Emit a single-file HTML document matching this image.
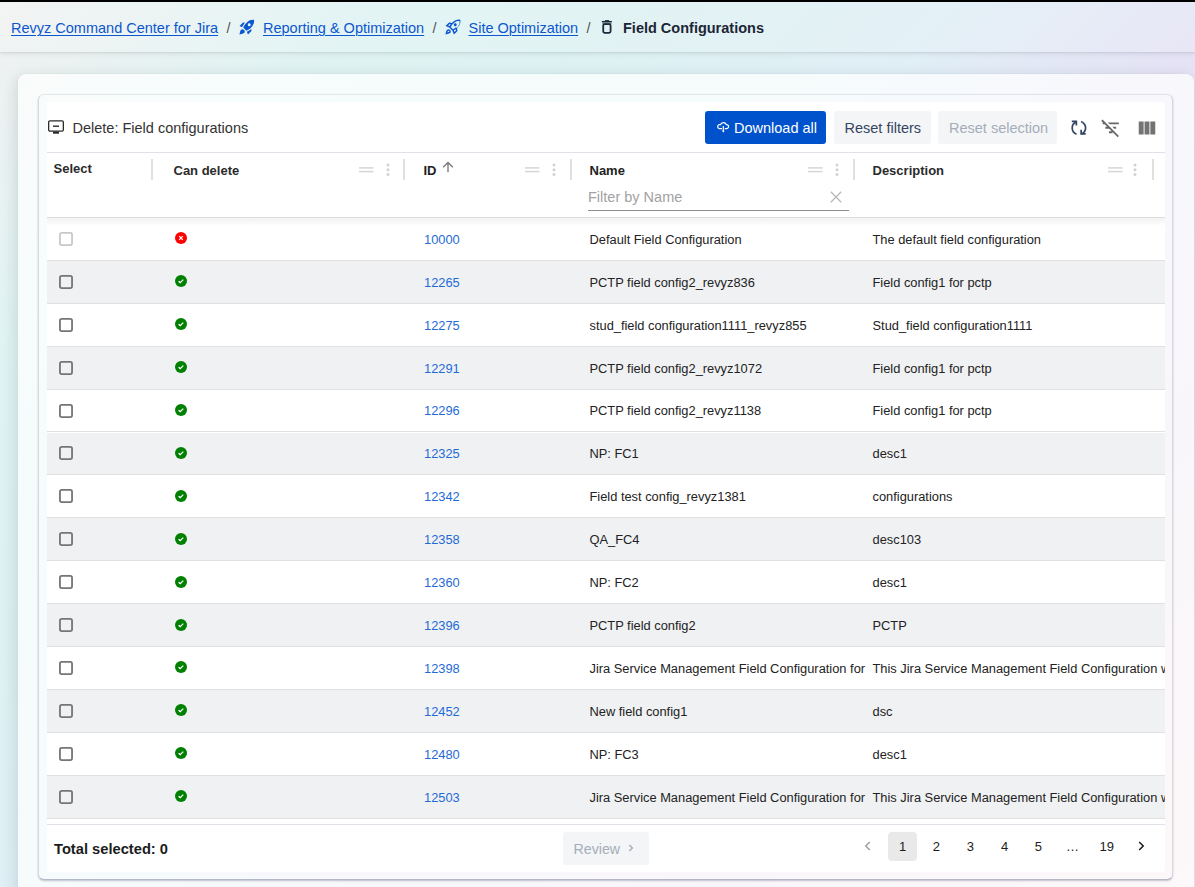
<!DOCTYPE html>
<html><head><meta charset="utf-8">
<style>
*{box-sizing:border-box}
html,body{margin:0;padding:0}
body{width:1195px;height:887px;overflow:hidden;position:relative;font-family:"Liberation Sans",sans-serif;
 background:linear-gradient(135deg,#f1f1f1 0%,#e0f3f2 17%,#ddf1f2 30%,#e0eff6 46%,#e5e2f5 60%,#eadff0 78%,#f6e6ec 100%);}
.t{position:absolute;line-height:1;white-space:pre}
.abs{position:absolute}
a{color:inherit}
.topbar{position:absolute;left:0;top:0;width:1195px;height:2px;background:#000}
.header{position:absolute;left:0;top:2px;width:1195px;height:50px;background:rgba(255,255,255,0.15);box-shadow:0 1px 2px rgba(0,0,0,0.09),0 2px 7px rgba(0,0,0,0.06)}
.panel{position:absolute;left:18px;top:74px;width:1176px;height:830px;border-radius:8px;background:rgba(255,255,255,0.72);box-shadow:0 0 2px rgba(0,40,50,0.05),0 6px 16px rgba(10,40,60,0.08),-5px 0 14px rgba(0,50,50,0.05)}
.card{position:absolute;left:38px;top:94px;width:1135px;height:786px;border-radius:6px;border:1px solid rgba(0,40,60,0.15);border-top-color:rgba(0,40,60,0.09);border-bottom-color:rgba(20,35,80,0.30);box-shadow:0 1px 1.5px rgba(20,30,70,0.18),0 1px 3px rgba(20,30,60,0.08)}
.inner{position:absolute;left:47px;top:102px;width:1118px;height:770px;border-radius:3px;background:#fff;overflow:hidden}
.lnk{text-decoration:underline;text-underline-offset:2px;text-decoration-thickness:1px}
.btn{position:absolute;border-radius:3px}
.row{position:absolute;left:47px;width:1118px;border-bottom:1px solid #dcdcdc}
.grey{background:#f0f1f3}
</style></head><body>
<div class="topbar"></div>
<div class="header"></div>
<div class="t" style="left:11.00px;top:21.13px;font-size:14.5px;font-weight:400;color:#0b57d0;"><span class="lnk">Revyz Command Center for Jira</span></div>
<div class="t" style="left:226.50px;top:21.13px;font-size:14.5px;font-weight:400;color:#555;">/</div>
<svg class="abs" style="left:237.5px;top:17.5px" width="18" height="18" viewBox="0 0 24 24"><path fill="#0b57d0" d="M9.19 6.35c-2.04 2.29-3.44 5.58-3.57 5.89L2 10.69l4.05-4.05c.47-.47 1.15-.68 1.81-.55l1.33.26zM11.17 17s3.74-1.55 5.89-3.7c5.4-5.4 4.5-9.62 4.21-10.57-.95-.3-5.17-1.19-10.57 4.21C8.55 9.09 7 12.83 7 12.83L11.17 17zm6.48-2.19c-2.29 2.04-5.58 3.44-5.89 3.57L13.31 22l4.05-4.05c.47-.47.68-1.15.55-1.81l-.26-1.33zM9 18c0 .83-.34 1.58-.88 2.12C6.94 21.3 2 22 2 22s.7-4.94 1.88-6.12C4.42 15.34 5.17 15 6 15c1.66 0 3 1.34 3 3zm4-9c0-1.1.9-2 2-2s2 .9 2 2-.9 2-2 2-2-.9-2-2z"/></svg>
<div class="t" style="left:263.00px;top:21.13px;font-size:14.5px;font-weight:400;color:#0b57d0;"><span class="lnk">Reporting &amp; Optimization</span></div>
<div class="t" style="left:432.50px;top:21.13px;font-size:14.5px;font-weight:400;color:#555;">/</div>
<svg class="abs" style="left:443.5px;top:17.5px" width="18" height="18" viewBox="0 0 24 24"><path fill="#0b57d0" d="M6 15c-.83 0-1.58.34-2.12.88C2.7 17.06 2 22 2 22s4.94-.7 6.12-1.88c.54-.54.88-1.29.88-2.12 0-1.66-1.34-3-3-3zm.71 3.71c-.28.28-2.17.76-2.17.76s.47-1.88.76-2.17c.17-.19.42-.3.7-.3.55 0 1 .45 1 1 0 .28-.11.53-.29.71zm10.71-5.06c6.36-6.36 4.24-11.31 4.24-11.31S16.71.22 10.35 6.58l-2.49-.5c-.65-.13-1.33.08-1.81.55L2 10.69l5 2.14L11.17 17l2.14 5 4.05-4.05c.47-.47.68-1.15.55-1.81l-.51-2.49zM7.41 10.83l-1.91-.82 1.97-1.97 1.44.29c-.57.83-1.08 1.7-1.5 2.5zm6.58 7.67l-.82-1.91c.8-.42 1.67-.93 2.49-1.5l.29 1.44-1.96 1.97zM16 12.24c-1.32 1.32-3.38 2.4-4.04 2.73l-2.93-2.93c.32-.65 1.4-2.71 2.73-4.04 4.68-4.68 8.23-3.99 8.99-3.74.24.77.93 4.32-3.75 9zM15 11c1.1 0 2-.9 2-2s-.9-2-2-2-2 .9-2 2 .9 2 2 2z"/></svg>
<div class="t" style="left:468.50px;top:21.13px;font-size:14.5px;font-weight:400;color:#0b57d0;"><span class="lnk">Site Optimization</span></div>
<div class="t" style="left:586.50px;top:21.13px;font-size:14.5px;font-weight:400;color:#555;">/</div>
<svg class="abs" style="left:600px;top:18px" width="14" height="18" viewBox="0 0 14 18"><path d="M1.83 3.58H11.88" stroke="#1e293b" stroke-width="1.3"/><path d="M5.06 2.55H9.03" stroke="#1e293b" stroke-width="0.95"/><rect x="3.23" y="6.1" width="7.37" height="8.74" rx="1.5" fill="none" stroke="#1e293b" stroke-width="1.8"/><rect x="2.33" y="4.2" width="9.17" height="2" fill="#1e293b" opacity="0.55"/></svg>
<div class="t" style="left:623.00px;top:21.13px;font-size:14.5px;font-weight:700;color:#1c2636;">Field Configurations</div>
<div class="panel"></div>
<div class="card"></div>
<div class="inner"></div>
<svg class="abs" style="left:47px;top:119px" width="18" height="16" viewBox="0 0 18 16"><rect x="1.65" y="1.85" width="14.7" height="10.3" rx="1.3" fill="none" stroke="#2b2b2b" stroke-width="1.3"/><path d="M6 7.2H12" stroke="#2b2b2b" stroke-width="1.4"/><rect x="6" y="12.5" width="6" height="2.2" fill="#2b2b2b"/></svg>
<div class="t" style="left:72.50px;top:120.73px;font-size:14.5px;font-weight:400;color:#333;">Delete: Field configurations</div>
<div class="btn" style="left:705px;top:111px;width:121px;height:33px;background:#0052cc"></div>
<svg class="abs" style="left:716px;top:120px" width="14" height="14" viewBox="0 0 14 14"><path d="M6.0 8.6H3.7A2 2 0 1 1 4.52 4.77A3 3 0 0 1 10.24 4.63A2 2 0 1 1 10.6 8.6H8.7" fill="none" stroke="#fff" stroke-width="1.2" stroke-linejoin="round"/><path d="M7.3 5.9V11.2" stroke="#fff" stroke-width="1.2"/><path d="M5.9 10.7L7.3 12.6 8.7 10.7Z" fill="#fff"/></svg>
<div class="t" style="left:734.00px;top:120.73px;font-size:14.5px;font-weight:400;color:#fff;">Download all</div>
<div class="btn" style="left:834px;top:111px;width:97px;height:33px;background:#f4f5f7"></div>
<div class="t" style="left:844.50px;top:120.73px;font-size:14.5px;font-weight:400;color:#344563;">Reset filters</div>
<div class="btn" style="left:938px;top:111px;width:119px;height:33px;background:#f4f5f7"></div>
<div class="t" style="left:949.00px;top:120.73px;font-size:14.5px;font-weight:400;color:#a5adba;">Reset selection</div>
<svg class="abs" style="left:1068px;top:118px" width="20" height="20" viewBox="0 0 20 20"><g fill="none" stroke="#344563" stroke-width="1.7"><path d="M8.2 3.9C5.6 5.0 4.2 7.3 4.2 9.9C4.2 12.6 5.8 15.0 8.5 16.3"/><path d="M3.8 3.3H8.35V7.4"/><path d="M13.1 3.4C15.9 4.8 17.6 7.0 17.6 9.8C17.6 12.4 16.1 14.8 13.5 16.0"/><path d="M13.15 11.8V15.85H17.7"/></g></svg>
<svg class="abs" style="left:1099.7px;top:116.9px" width="21.5" height="21.5" viewBox="0 0 24 24"><path fill="#666" d="M10.83 8H21V6H8.83l2 2zm5 5H18v-2h-4.17l2 2zM14 16.83V18h-4v-2h3.17l-3-3H6v-2h2.17l-3-3H3V6h.17L1.39 4.22 2.8 2.81l18.38 18.38-1.41 1.41L14 16.83z"/></svg>
<svg class="abs" style="left:1135.5px;top:116.9px" width="22" height="22" viewBox="0 0 24 24"><path fill="#737373" d="M14.67 5v14H9.33V5h5.34zm1 14H21V5h-5.33v14zm-7.34 0V5H3v14h5.33z"/></svg>
<div class="abs" style="left:47px;top:152px;width:1118px;height:1px;background:#dfe1e8"></div>
<div class="abs" style="left:47px;top:217px;width:1118px;height:1px;background:#dddddd"></div>
<div class="abs" style="left:47px;top:218px;width:1118px;height:8px;background:linear-gradient(rgba(0,0,0,0.05),rgba(0,0,0,0))"></div>
<div class="t" style="left:53.50px;top:161.60px;font-size:13px;font-weight:700;color:#2b2b2b;">Select</div>
<div class="abs" style="left:150.5px;top:159px;width:2px;height:20.5px;background:#e0e0e0"></div>
<div class="t" style="left:173.50px;top:163.80px;font-size:13px;font-weight:700;color:#2b2b2b;">Can delete</div>
<svg class="abs" style="left:358.5px;top:165px" width="15" height="9" viewBox="0 0 15 9"><rect x="0" y="2.15" width="14.5" height="1.5" fill="#d6d6d6"/><rect x="0" y="5.85" width="14.5" height="1.5" fill="#d6d6d6"/></svg>
<svg class="abs" style="left:384.7px;top:161px" width="6" height="17" viewBox="0 0 6 17"><circle cx="3" cy="4" r="1.5" fill="#d2d2d2"/><circle cx="3" cy="8.8" r="1.5" fill="#d2d2d2"/><circle cx="3" cy="13.6" r="1.5" fill="#d2d2d2"/></svg>
<div class="abs" style="left:403.2px;top:159px;width:2px;height:20.5px;background:#e0e0e0"></div>
<div class="t" style="left:423.50px;top:164.00px;font-size:13px;font-weight:700;color:#1e1e1e;">ID</div>
<svg class="abs" style="left:442px;top:161px" width="12" height="12" viewBox="0 0 12 12"><path d="M6 11.3V1.6M1.2 6.2L6 1.4 10.8 6.2" fill="none" stroke="#7a7a7a" stroke-width="1.35"/></svg>
<svg class="abs" style="left:524.5px;top:165px" width="15" height="9" viewBox="0 0 15 9"><rect x="0" y="2.15" width="14.5" height="1.5" fill="#d6d6d6"/><rect x="0" y="5.85" width="14.5" height="1.5" fill="#d6d6d6"/></svg>
<svg class="abs" style="left:550.7px;top:161px" width="6" height="17" viewBox="0 0 6 17"><circle cx="3" cy="4" r="1.5" fill="#d2d2d2"/><circle cx="3" cy="8.8" r="1.5" fill="#d2d2d2"/><circle cx="3" cy="13.6" r="1.5" fill="#d2d2d2"/></svg>
<div class="abs" style="left:570px;top:159px;width:2px;height:20.5px;background:#e0e0e0"></div>
<div class="t" style="left:589.50px;top:164.00px;font-size:13px;font-weight:700;color:#1e1e1e;">Name</div>
<svg class="abs" style="left:807.5px;top:165px" width="15" height="9" viewBox="0 0 15 9"><rect x="0" y="2.15" width="14.5" height="1.5" fill="#d6d6d6"/><rect x="0" y="5.85" width="14.5" height="1.5" fill="#d6d6d6"/></svg>
<svg class="abs" style="left:833.7px;top:161px" width="6" height="17" viewBox="0 0 6 17"><circle cx="3" cy="4" r="1.5" fill="#d2d2d2"/><circle cx="3" cy="8.8" r="1.5" fill="#d2d2d2"/><circle cx="3" cy="13.6" r="1.5" fill="#d2d2d2"/></svg>
<div class="abs" style="left:853px;top:159px;width:2px;height:20.5px;background:#e0e0e0"></div>
<div class="t" style="left:872.50px;top:164.00px;font-size:13px;font-weight:700;color:#2b2b2b;">Description</div>
<svg class="abs" style="left:1107.5px;top:165px" width="15" height="9" viewBox="0 0 15 9"><rect x="0" y="2.15" width="14.5" height="1.5" fill="#d6d6d6"/><rect x="0" y="5.85" width="14.5" height="1.5" fill="#d6d6d6"/></svg>
<svg class="abs" style="left:1132.4px;top:161px" width="6" height="17" viewBox="0 0 6 17"><circle cx="3" cy="4" r="1.5" fill="#d2d2d2"/><circle cx="3" cy="8.8" r="1.5" fill="#d2d2d2"/><circle cx="3" cy="13.6" r="1.5" fill="#d2d2d2"/></svg>
<div class="abs" style="left:1152.2px;top:159px;width:2px;height:20.5px;background:#e0e0e0"></div>
<div class="t" style="left:588.00px;top:189.73px;font-size:14.5px;font-weight:400;color:#a2a2a2;">Filter by Name</div>
<svg class="abs" style="left:829px;top:190px" width="14" height="14" viewBox="0 0 14 14"><path d="M1.8 1.8L12.2 12.2M12.2 1.8L1.8 12.2" stroke="#b8b8b8" stroke-width="1.3"/></svg>
<div class="abs" style="left:588px;top:209.7px;width:261px;height:1px;background:#8c8c8c"></div>
<div class="abs" style="left:47px;top:218px;width:1118px;height:607px;overflow:hidden">
<div class="abs" style="left:0;top:0.00px;width:1118px;height:42.9px;border-bottom:1px solid #e0e0e0"></div>
<svg class="abs" style="left:12px;top:13.95px" width="15" height="15" viewBox="0 0 15 15"><rect x="0.95" y="0.95" width="12.1" height="12.1" rx="1.8" fill="none" stroke="#c8c8c8" stroke-width="1.8"/></svg>
<svg class="abs" style="left:128px;top:14.45px" width="12" height="12" viewBox="0 0 12 12"><circle cx="6" cy="6" r="6" fill="#ff0000"/><path d="M4.2 4.2L7.8 7.8M7.8 4.2L4.2 7.8" fill="none" stroke="#fff" stroke-width="1.2"/></svg>
<div class="t" style="left:377.00px;top:15.87px;font-size:12.85px;font-weight:400;color:#1f6bd6;">10000</div>
<div class="t" style="left:542.50px;top:15.87px;font-size:12.85px;font-weight:400;color:#222;">Default Field Configuration</div>
<div class="t" style="left:825.50px;top:15.87px;font-size:12.85px;font-weight:400;color:#222;">The default field configuration</div>
<div class="abs" style="left:0;top:42.90px;width:1118px;height:42.9px;background:#f0f1f3;border-bottom:1px solid #e0e0e0"></div>
<svg class="abs" style="left:12px;top:56.85px" width="15" height="15" viewBox="0 0 15 15"><rect x="0.95" y="0.95" width="12.1" height="12.1" rx="1.8" fill="none" stroke="#757575" stroke-width="1.8"/></svg>
<svg class="abs" style="left:128px;top:57.35px" width="12" height="12" viewBox="0 0 12 12"><circle cx="6" cy="6" r="6" fill="#008000"/><path d="M3.6 6.2L5.2 7.6 8.3 4.6" fill="none" stroke="#fff" stroke-width="1.3"/></svg>
<div class="t" style="left:377.00px;top:58.77px;font-size:12.85px;font-weight:400;color:#1f6bd6;">12265</div>
<div class="t" style="left:542.50px;top:58.77px;font-size:12.85px;font-weight:400;color:#222;">PCTP field config2_revyz836</div>
<div class="t" style="left:825.50px;top:58.77px;font-size:12.85px;font-weight:400;color:#222;">Field config1 for pctp</div>
<div class="abs" style="left:0;top:85.80px;width:1118px;height:42.9px;border-bottom:1px solid #e0e0e0"></div>
<svg class="abs" style="left:12px;top:99.75px" width="15" height="15" viewBox="0 0 15 15"><rect x="0.95" y="0.95" width="12.1" height="12.1" rx="1.8" fill="none" stroke="#757575" stroke-width="1.8"/></svg>
<svg class="abs" style="left:128px;top:100.25px" width="12" height="12" viewBox="0 0 12 12"><circle cx="6" cy="6" r="6" fill="#008000"/><path d="M3.6 6.2L5.2 7.6 8.3 4.6" fill="none" stroke="#fff" stroke-width="1.3"/></svg>
<div class="t" style="left:377.00px;top:101.67px;font-size:12.85px;font-weight:400;color:#1f6bd6;">12275</div>
<div class="t" style="left:542.50px;top:101.67px;font-size:12.85px;font-weight:400;color:#222;">stud_field configuration1111_revyz855</div>
<div class="t" style="left:825.50px;top:101.67px;font-size:12.85px;font-weight:400;color:#222;">Stud_field configuration1111</div>
<div class="abs" style="left:0;top:128.70px;width:1118px;height:42.9px;background:#f0f1f3;border-bottom:1px solid #e0e0e0"></div>
<svg class="abs" style="left:12px;top:142.65px" width="15" height="15" viewBox="0 0 15 15"><rect x="0.95" y="0.95" width="12.1" height="12.1" rx="1.8" fill="none" stroke="#757575" stroke-width="1.8"/></svg>
<svg class="abs" style="left:128px;top:143.15px" width="12" height="12" viewBox="0 0 12 12"><circle cx="6" cy="6" r="6" fill="#008000"/><path d="M3.6 6.2L5.2 7.6 8.3 4.6" fill="none" stroke="#fff" stroke-width="1.3"/></svg>
<div class="t" style="left:377.00px;top:144.57px;font-size:12.85px;font-weight:400;color:#1f6bd6;">12291</div>
<div class="t" style="left:542.50px;top:144.57px;font-size:12.85px;font-weight:400;color:#222;">PCTP field config2_revyz1072</div>
<div class="t" style="left:825.50px;top:144.57px;font-size:12.85px;font-weight:400;color:#222;">Field config1 for pctp</div>
<div class="abs" style="left:0;top:171.60px;width:1118px;height:42.9px;border-bottom:1px solid #e0e0e0"></div>
<svg class="abs" style="left:12px;top:185.55px" width="15" height="15" viewBox="0 0 15 15"><rect x="0.95" y="0.95" width="12.1" height="12.1" rx="1.8" fill="none" stroke="#757575" stroke-width="1.8"/></svg>
<svg class="abs" style="left:128px;top:186.05px" width="12" height="12" viewBox="0 0 12 12"><circle cx="6" cy="6" r="6" fill="#008000"/><path d="M3.6 6.2L5.2 7.6 8.3 4.6" fill="none" stroke="#fff" stroke-width="1.3"/></svg>
<div class="t" style="left:377.00px;top:187.47px;font-size:12.85px;font-weight:400;color:#1f6bd6;">12296</div>
<div class="t" style="left:542.50px;top:187.47px;font-size:12.85px;font-weight:400;color:#222;">PCTP field config2_revyz1138</div>
<div class="t" style="left:825.50px;top:187.47px;font-size:12.85px;font-weight:400;color:#222;">Field config1 for pctp</div>
<div class="abs" style="left:0;top:214.50px;width:1118px;height:42.9px;background:#f0f1f3;border-bottom:1px solid #e0e0e0"></div>
<svg class="abs" style="left:12px;top:228.45px" width="15" height="15" viewBox="0 0 15 15"><rect x="0.95" y="0.95" width="12.1" height="12.1" rx="1.8" fill="none" stroke="#757575" stroke-width="1.8"/></svg>
<svg class="abs" style="left:128px;top:228.95px" width="12" height="12" viewBox="0 0 12 12"><circle cx="6" cy="6" r="6" fill="#008000"/><path d="M3.6 6.2L5.2 7.6 8.3 4.6" fill="none" stroke="#fff" stroke-width="1.3"/></svg>
<div class="t" style="left:377.00px;top:230.37px;font-size:12.85px;font-weight:400;color:#1f6bd6;">12325</div>
<div class="t" style="left:542.50px;top:230.37px;font-size:12.85px;font-weight:400;color:#222;">NP: FC1</div>
<div class="t" style="left:825.50px;top:230.37px;font-size:12.85px;font-weight:400;color:#222;">desc1</div>
<div class="abs" style="left:0;top:257.40px;width:1118px;height:42.9px;border-bottom:1px solid #e0e0e0"></div>
<svg class="abs" style="left:12px;top:271.35px" width="15" height="15" viewBox="0 0 15 15"><rect x="0.95" y="0.95" width="12.1" height="12.1" rx="1.8" fill="none" stroke="#757575" stroke-width="1.8"/></svg>
<svg class="abs" style="left:128px;top:271.85px" width="12" height="12" viewBox="0 0 12 12"><circle cx="6" cy="6" r="6" fill="#008000"/><path d="M3.6 6.2L5.2 7.6 8.3 4.6" fill="none" stroke="#fff" stroke-width="1.3"/></svg>
<div class="t" style="left:377.00px;top:273.27px;font-size:12.85px;font-weight:400;color:#1f6bd6;">12342</div>
<div class="t" style="left:542.50px;top:273.27px;font-size:12.85px;font-weight:400;color:#222;">Field test config_revyz1381</div>
<div class="t" style="left:825.50px;top:273.27px;font-size:12.85px;font-weight:400;color:#222;">configurations</div>
<div class="abs" style="left:0;top:300.30px;width:1118px;height:42.9px;background:#f0f1f3;border-bottom:1px solid #e0e0e0"></div>
<svg class="abs" style="left:12px;top:314.25px" width="15" height="15" viewBox="0 0 15 15"><rect x="0.95" y="0.95" width="12.1" height="12.1" rx="1.8" fill="none" stroke="#757575" stroke-width="1.8"/></svg>
<svg class="abs" style="left:128px;top:314.75px" width="12" height="12" viewBox="0 0 12 12"><circle cx="6" cy="6" r="6" fill="#008000"/><path d="M3.6 6.2L5.2 7.6 8.3 4.6" fill="none" stroke="#fff" stroke-width="1.3"/></svg>
<div class="t" style="left:377.00px;top:316.17px;font-size:12.85px;font-weight:400;color:#1f6bd6;">12358</div>
<div class="t" style="left:542.50px;top:316.17px;font-size:12.85px;font-weight:400;color:#222;">QA_FC4</div>
<div class="t" style="left:825.50px;top:316.17px;font-size:12.85px;font-weight:400;color:#222;">desc103</div>
<div class="abs" style="left:0;top:343.20px;width:1118px;height:42.9px;border-bottom:1px solid #e0e0e0"></div>
<svg class="abs" style="left:12px;top:357.15px" width="15" height="15" viewBox="0 0 15 15"><rect x="0.95" y="0.95" width="12.1" height="12.1" rx="1.8" fill="none" stroke="#757575" stroke-width="1.8"/></svg>
<svg class="abs" style="left:128px;top:357.65px" width="12" height="12" viewBox="0 0 12 12"><circle cx="6" cy="6" r="6" fill="#008000"/><path d="M3.6 6.2L5.2 7.6 8.3 4.6" fill="none" stroke="#fff" stroke-width="1.3"/></svg>
<div class="t" style="left:377.00px;top:359.07px;font-size:12.85px;font-weight:400;color:#1f6bd6;">12360</div>
<div class="t" style="left:542.50px;top:359.07px;font-size:12.85px;font-weight:400;color:#222;">NP: FC2</div>
<div class="t" style="left:825.50px;top:359.07px;font-size:12.85px;font-weight:400;color:#222;">desc1</div>
<div class="abs" style="left:0;top:386.10px;width:1118px;height:42.9px;background:#f0f1f3;border-bottom:1px solid #e0e0e0"></div>
<svg class="abs" style="left:12px;top:400.05px" width="15" height="15" viewBox="0 0 15 15"><rect x="0.95" y="0.95" width="12.1" height="12.1" rx="1.8" fill="none" stroke="#757575" stroke-width="1.8"/></svg>
<svg class="abs" style="left:128px;top:400.55px" width="12" height="12" viewBox="0 0 12 12"><circle cx="6" cy="6" r="6" fill="#008000"/><path d="M3.6 6.2L5.2 7.6 8.3 4.6" fill="none" stroke="#fff" stroke-width="1.3"/></svg>
<div class="t" style="left:377.00px;top:401.97px;font-size:12.85px;font-weight:400;color:#1f6bd6;">12396</div>
<div class="t" style="left:542.50px;top:401.97px;font-size:12.85px;font-weight:400;color:#222;">PCTP field config2</div>
<div class="t" style="left:825.50px;top:401.97px;font-size:12.85px;font-weight:400;color:#222;">PCTP</div>
<div class="abs" style="left:0;top:429.00px;width:1118px;height:42.9px;border-bottom:1px solid #e0e0e0"></div>
<svg class="abs" style="left:12px;top:442.95px" width="15" height="15" viewBox="0 0 15 15"><rect x="0.95" y="0.95" width="12.1" height="12.1" rx="1.8" fill="none" stroke="#757575" stroke-width="1.8"/></svg>
<svg class="abs" style="left:128px;top:443.45px" width="12" height="12" viewBox="0 0 12 12"><circle cx="6" cy="6" r="6" fill="#008000"/><path d="M3.6 6.2L5.2 7.6 8.3 4.6" fill="none" stroke="#fff" stroke-width="1.3"/></svg>
<div class="t" style="left:377.00px;top:444.87px;font-size:12.85px;font-weight:400;color:#1f6bd6;">12398</div>
<div class="t" style="left:542.50px;top:444.87px;font-size:12.85px;font-weight:400;color:#222;">Jira Service Management Field Configuration for</div>
<div class="t" style="left:825.50px;top:444.87px;font-size:12.85px;font-weight:400;color:#222;">This Jira Service Management Field Configuration wi</div>
<div class="abs" style="left:0;top:471.90px;width:1118px;height:42.9px;background:#f0f1f3;border-bottom:1px solid #e0e0e0"></div>
<svg class="abs" style="left:12px;top:485.85px" width="15" height="15" viewBox="0 0 15 15"><rect x="0.95" y="0.95" width="12.1" height="12.1" rx="1.8" fill="none" stroke="#757575" stroke-width="1.8"/></svg>
<svg class="abs" style="left:128px;top:486.35px" width="12" height="12" viewBox="0 0 12 12"><circle cx="6" cy="6" r="6" fill="#008000"/><path d="M3.6 6.2L5.2 7.6 8.3 4.6" fill="none" stroke="#fff" stroke-width="1.3"/></svg>
<div class="t" style="left:377.00px;top:487.77px;font-size:12.85px;font-weight:400;color:#1f6bd6;">12452</div>
<div class="t" style="left:542.50px;top:487.77px;font-size:12.85px;font-weight:400;color:#222;">New field config1</div>
<div class="t" style="left:825.50px;top:487.77px;font-size:12.85px;font-weight:400;color:#222;">dsc</div>
<div class="abs" style="left:0;top:514.80px;width:1118px;height:42.9px;border-bottom:1px solid #e0e0e0"></div>
<svg class="abs" style="left:12px;top:528.75px" width="15" height="15" viewBox="0 0 15 15"><rect x="0.95" y="0.95" width="12.1" height="12.1" rx="1.8" fill="none" stroke="#757575" stroke-width="1.8"/></svg>
<svg class="abs" style="left:128px;top:529.25px" width="12" height="12" viewBox="0 0 12 12"><circle cx="6" cy="6" r="6" fill="#008000"/><path d="M3.6 6.2L5.2 7.6 8.3 4.6" fill="none" stroke="#fff" stroke-width="1.3"/></svg>
<div class="t" style="left:377.00px;top:530.67px;font-size:12.85px;font-weight:400;color:#1f6bd6;">12480</div>
<div class="t" style="left:542.50px;top:530.67px;font-size:12.85px;font-weight:400;color:#222;">NP: FC3</div>
<div class="t" style="left:825.50px;top:530.67px;font-size:12.85px;font-weight:400;color:#222;">desc1</div>
<div class="abs" style="left:0;top:557.70px;width:1118px;height:42.9px;background:#f0f1f3;border-bottom:1px solid #e0e0e0"></div>
<svg class="abs" style="left:12px;top:571.65px" width="15" height="15" viewBox="0 0 15 15"><rect x="0.95" y="0.95" width="12.1" height="12.1" rx="1.8" fill="none" stroke="#757575" stroke-width="1.8"/></svg>
<svg class="abs" style="left:128px;top:572.15px" width="12" height="12" viewBox="0 0 12 12"><circle cx="6" cy="6" r="6" fill="#008000"/><path d="M3.6 6.2L5.2 7.6 8.3 4.6" fill="none" stroke="#fff" stroke-width="1.3"/></svg>
<div class="t" style="left:377.00px;top:573.57px;font-size:12.85px;font-weight:400;color:#1f6bd6;">12503</div>
<div class="t" style="left:542.50px;top:573.57px;font-size:12.85px;font-weight:400;color:#222;">Jira Service Management Field Configuration for</div>
<div class="t" style="left:825.50px;top:573.57px;font-size:12.85px;font-weight:400;color:#222;">This Jira Service Management Field Configuration wi</div>
</div>
<div class="abs" style="left:47px;top:824px;width:1118px;height:1px;background:#dfe1e8"></div>
<div class="t" style="left:54.00px;top:841.76px;font-size:14.7px;font-weight:700;color:#1c1c1c;">Total selected: 0</div>
<div class="btn" style="left:563px;top:832px;width:86px;height:33px;background:#f4f5f7"></div>
<div class="t" style="left:573.50px;top:841.98px;font-size:14.2px;font-weight:400;color:#a5adba;">Review</div>
<svg class="abs" style="left:627px;top:843px" width="8" height="10" viewBox="0 0 8 10"><path d="M2.3 1.9L5.4 5 2.3 8.1" fill="none" stroke="#a5adba" stroke-width="1.4"/></svg>
<svg class="abs" style="left:863px;top:840px" width="9" height="12" viewBox="0 0 9 12"><path d="M6.8 2L2.8 6 6.8 10" fill="none" stroke="#9e9e9e" stroke-width="1.5"/></svg>
<div class="btn" style="left:888px;top:832px;width:28.5px;height:28.5px;border-radius:4px;background:#e9e9e9"></div>
<div class="t" style="left:882.5px;width:40px;text-align:center;top:840.00px;font-size:13px;color:#1c1c1c">1</div>
<div class="t" style="left:916.4px;width:40px;text-align:center;top:840.00px;font-size:13px;color:#1c1c1c">2</div>
<div class="t" style="left:950.4px;width:40px;text-align:center;top:840.00px;font-size:13px;color:#1c1c1c">3</div>
<div class="t" style="left:984.5px;width:40px;text-align:center;top:840.00px;font-size:13px;color:#1c1c1c">4</div>
<div class="t" style="left:1018.4000000000001px;width:40px;text-align:center;top:840.00px;font-size:13px;color:#1c1c1c">5</div>
<div class="t" style="left:1052.4px;width:40px;text-align:center;top:840.00px;font-size:13px;color:#1c1c1c">…</div>
<div class="t" style="left:1086.8px;width:40px;text-align:center;top:840.00px;font-size:13px;color:#1c1c1c">19</div>
<svg class="abs" style="left:1137px;top:840px" width="9" height="12" viewBox="0 0 9 12"><path d="M2.2 2L6.2 6 2.2 10" fill="none" stroke="#1a1a1a" stroke-width="1.5"/></svg>
</body></html>
